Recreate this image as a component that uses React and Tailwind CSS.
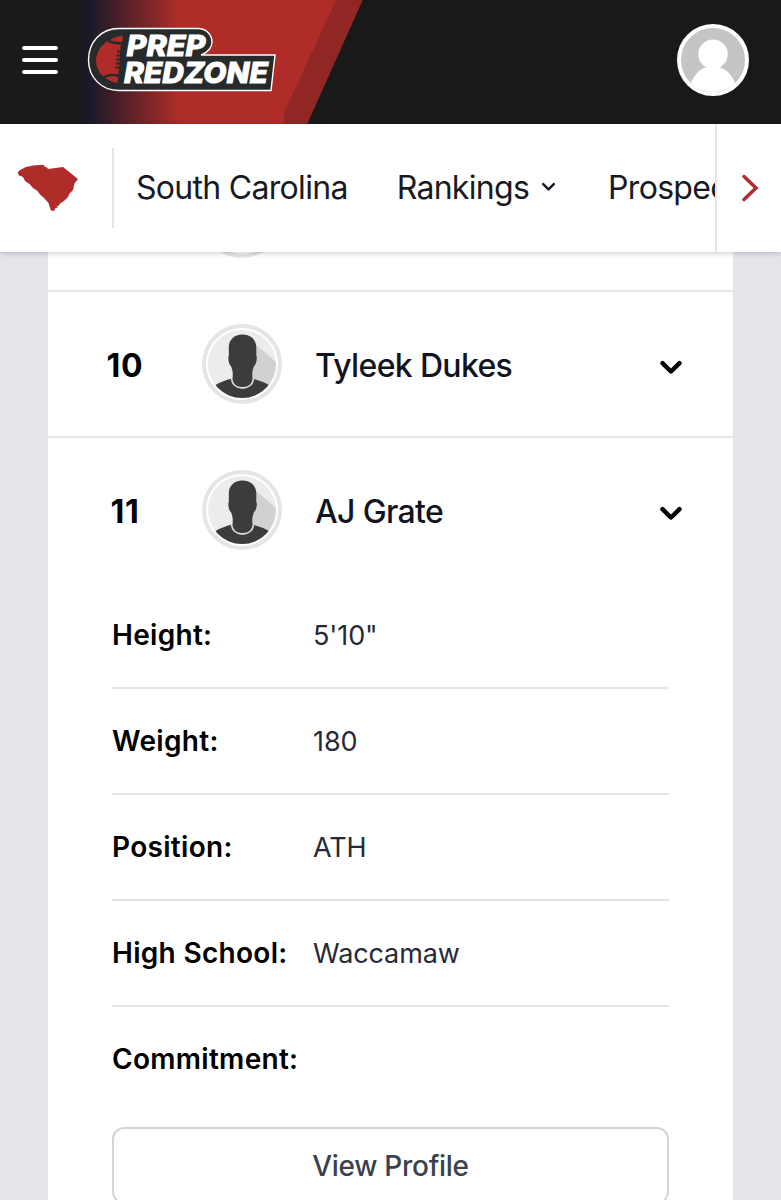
import { useState } from "react";

const navItems = [
  { label: "South Carolina" },
  { label: "Rankings", menu: true },
  { label: "Prospects" },
];

const players = [
  { rank: 10, name: "Tyleek Dukes" },
  {
    rank: 11,
    name: "AJ Grate",
    details: [
      { label: "Height:", value: "5'10\"" },
      { label: "Weight:", value: "180" },
      { label: "Position:", value: "ATH" },
      { label: "High School:", value: "Waccamaw" },
      { label: "Commitment:", value: "" },
    ],
  },
];

function Logo() {
  return (
    <svg width="190" height="66" viewBox="0 0 190 66" className="relative -ml-px shrink-0">
      <path
        d="M32 1.5H111C119 1.5 125 7.5 125 15C125 20 121 25.5 114 28H188L184 63.5H32C14 63.5 1.5 50 1.5 33C1.5 15 14 1.5 32 1.5Z"
        fill="#272a2a"
        stroke="#fff"
        strokeWidth="1.4"
      />
      <path d="M36 8.5C21 11 9.5 20 9 33.5C9 45 18 54 30.5 56Z" fill="#b02c29" />
      <path d="M19 12Q26 17.5 37 16M16 51Q23 46 32 49" fill="none" stroke="#272a2a" strokeWidth="2.4" />
      <path d="M34.500 18L32.500 47M30 24.5h5M29.500 28.5h5M29 32.5h5M28.500 36.5h5M28 40.5h5" fill="none" stroke="#272a2a" strokeWidth="1.8" />
      <g fill="#fff" stroke="#fff" strokeWidth="0.9" fontFamily="Inter, sans-serif" fontWeight="800" fontStyle="italic" fontSize="28">
        <text x="39.500" y="29" textLength="79" lengthAdjust="spacingAndGlyphs">PREP</text>
        <text x="37" y="56" textLength="144" lengthAdjust="spacingAndGlyphs">REDZONE</text>
      </g>
    </svg>
  );
}

function SouthCarolina() {
  return (
    <svg width="62" height="50" viewBox="0 0 62 50" fill="#b02c29" className="mt-0.5">
      <path d="M.5 8.5L3 6L9 3L16 1.5L26.5.8L27.5 2.5L30 3.5L31 5L46 3L61 15L57.5 19.5L56 26L52.5 29.5L51 33L47 37L43 39.5L42 41.5L40 42L41 43.5L38.5 44L37 47L34 46.5L33 44L31.5 39L27 34L23 30.5L20.5 27L16 24L12.5 20L8 17L6 13L2 11.5Z" />
    </svg>
  );
}

function Chevron({ className, size = 24, stroke = 4.5 }) {
  return (
    <svg width={size} height={size} viewBox="0 0 24 24" fill="none" stroke="currentColor" strokeWidth={stroke} strokeLinecap="round" strokeLinejoin="round" className={className}>
      <path d="M3.5 8.2L12 16.5L20.5 8.2" />
    </svg>
  );
}

function PlayerAvatar() {
  return (
    <div className="size-20 shrink-0 rounded-full border-4 border-[#e4e5e9] bg-white p-0.5">
      <svg viewBox="0 0 68 68" className="size-full rounded-full">
        <rect width="68" height="68" fill="#ececec" />
        <path d="M47 14L68 32V68H34V40Z" fill="#d1d1d1" />
        <path d="M0 59L7.500 55Q14 51 24 48.500H44Q54 51 61 55L68 59V68H0Z" fill="#3c3c3c" />
        <path d="M23.500 48C24 54.500 28.500 58 34.500 58C40.500 58 45 54.500 45.500 48" fill="#3c3c3c" stroke="#d8d8d8" strokeWidth="1.8" />
        <path d="M34.500 4.500C26 4.500 21 10 20.800 17V26C19.800 26.500 20.500 35 23 36C23.500 38 24.700 40 24.700 43V49C26 54 29.500 56.300 34.500 56.300C39.500 56.300 43 54 44.300 49V43C44.300 40 45.500 38 46 36C48.500 35 49.500 26.500 48.300 26V17C48 10 43 4.500 34.500 4.500Z" fill="#3c3c3c" />
      </svg>
    </div>
  );
}

function Player({ player }) {
  const [open, setOpen] = useState(Boolean(player.details));

  return (
    <li className="border-t-2 border-[#e4e5e9]">
      <button onClick={() => setOpen(!open)} className="flex h-36 w-full items-center pr-[50px] text-left">
        <span className="mt-[3px] w-[154px] text-center text-[32px] font-bold tracking-[0.8px] text-black">{player.rank}</span>
        <PlayerAvatar />
        <span className="mt-[3px] ml-[33px] flex-1 text-[32px] font-medium tracking-[-0.66px] text-[#111322]">{player.name}</span>
        <Chevron className="mt-1.5 text-black" />
      </button>

      {open && player.details && (
        <div className="px-16 pt-px">
          <dl className="w-[557px]">
            {player.details.map((d) => (
              <div key={d.label} className="flex h-[106px] items-center border-b-2 border-[#e4e5e7] text-[28px] last:border-transparent">
                <dt className="w-[201px] font-semibold tracking-[0.3px] whitespace-nowrap text-black">{d.label}</dt>
                <dd className="pt-0.5 text-[27px] tracking-[-0.1px] text-[#252a37]">{d.value}</dd>
              </div>
            ))}
          </dl>
          <button className="mt-[14px] h-[77px] w-[557px] rounded-xl border-2 border-[#d2d4da] text-[28px] font-medium tracking-[-0.3px] text-[#3b414e]">
            View Profile
          </button>
        </div>
      )}
    </li>
  );
}

export default function App() {
  return (
    <div className="h-[1200px] w-[781px] overflow-hidden bg-[#e4e5ea] font-['Inter',sans-serif]">
      <header className="relative flex h-[124px] items-center bg-[#19191b] pr-8 pb-1 pl-[22px]">
        {/* Slanted team-colour band */}
        <svg className="absolute top-0 left-20" width="290" height="124" viewBox="0 0 290 124">
          <defs>
            <linearGradient id="band" gradientUnits="userSpaceOnUse" x1="0" y1="0" x2="100" y2="0">
              <stop offset="0" stopColor="#19191f" />
              <stop offset="0.1" stopColor="#1b1929" />
              <stop offset="1" stopColor="#b02c29" />
            </linearGradient>
          </defs>
          <path d="M0 0H282.500L227 124H0Z" fill="url(#band)" />
          <path d="M256 0H282.500L227 124H204V113Z" fill="#902725" />
        </svg>
        <button aria-label="Menu" className="relative mr-[30px] flex w-9 flex-col gap-2">
          <span className="h-1 rounded-full bg-white" />
          <span className="h-1 rounded-full bg-white" />
          <span className="h-1 rounded-full bg-white" />
        </button>
        <Logo />
        <div className="relative ml-auto size-[72px] overflow-hidden rounded-full border-4 border-white bg-[#c5c5c5]">
          <svg viewBox="0 0 64 64" className="size-full scale-105" fill="#fff">
            <circle cx="32" cy="26.500" r="14" />
            <path d="M10 57C14 44 22 38 32 38S50 44 54 57L60 66H4Z" />
          </svg>
        </div>
      </header>

      <nav className="relative z-10 flex h-32 bg-white shadow-[0_1px_5px_rgba(0,0,0,0.22)]">
        <div className="flex w-[114px] items-center pl-[17px]">
          <SouthCarolina />
          <span className="ml-auto h-20 w-0.5 bg-[#e4e5e8]" />
        </div>
        <div className="flex flex-1 items-center gap-[49px] overflow-hidden pl-[22px] text-[32px] tracking-[-0.7px] text-[#171923]">
          {navItems.map((item) => (
            <a key={item.label} href="#" className="flex shrink-0 items-center whitespace-nowrap">
              {item.label}
              {item.menu && <Chevron size={15} stroke={4} className="mr-[3px] mb-1 ml-3" />}
            </a>
          ))}
        </div>
        <button aria-label="Scroll right" className="flex w-[66px] items-center border-l-2 border-[#e4e5e8] pl-[24px] text-[#b02c29]">
          <svg width="18" height="28" viewBox="0 0 18 28" fill="none" stroke="currentColor" strokeWidth="3.500" strokeLinecap="round">
            <path d="M3 2.500L15 14L3 25.500" />
          </svg>
        </button>
      </nav>

      <main className="mx-12 w-[685px] bg-white">
        {/* Only the end of the previous row shows under the nav */}
        <div className="flex h-[38px] flex-col justify-end overflow-hidden">
          <div className="flex h-36 shrink-0 items-center pl-[154px]">
            <PlayerAvatar />
          </div>
        </div>
        <ul>
          {players.map((p) => (
            <Player key={p.rank} player={p} />
          ))}
        </ul>
      </main>
    </div>
  );
}
